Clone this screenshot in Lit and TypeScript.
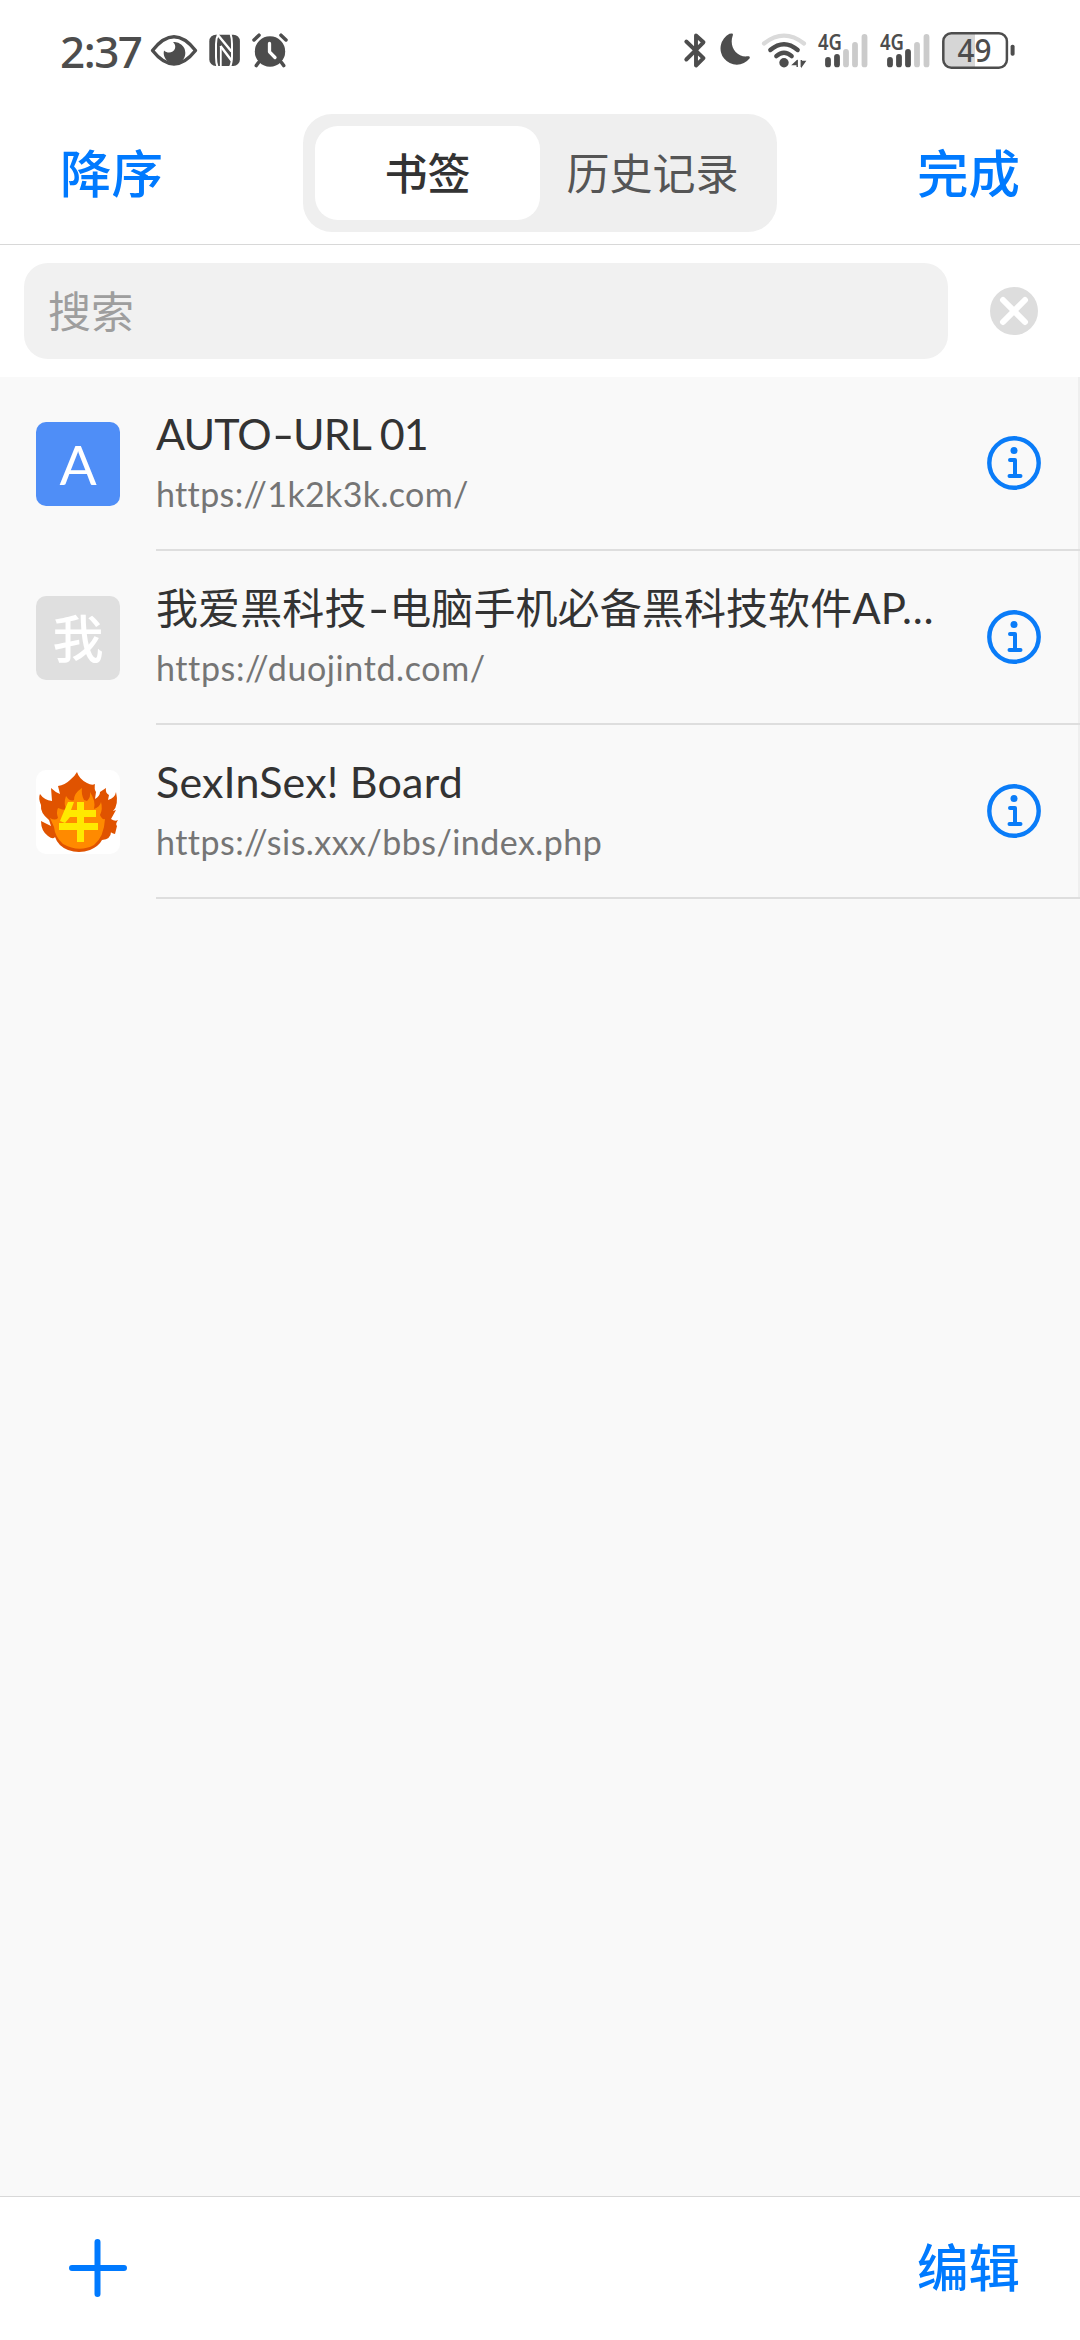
import { LitElement, html, svg, css, nothing } from "lit";
import { customElement, property } from "lit/decorators.js";

interface Bookmark {
  title: string;
  url: string;
  kind: "blue" | "gray" | "flame";
  letter: string;
  fit: string;
}

const BOOKMARKS: Bookmark[] = [
  { title: "AUTO-URL 01", url: "https://1k2k3k.com/", kind: "blue", letter: "A", fit: "one" },
  { title: "我爱黑科技-电脑手机必备黑科技软件AP…", url: "https://duojintd.com/", kind: "gray", letter: "我", fit: "two" },
  { title: "SexInSex! Board", url: "https://sis.xxx/bbs/index.php", kind: "flame", letter: "牛", fit: "three" },
];

// Status icons share one coordinate space; each takes the slice [x, x + w].
const slice = (x: number, w: number, body: unknown) =>
  html`<svg width=${w} height="102" viewBox="${x} 0 ${w} 102">${body}</svg>`;

const signal = (dx: number, lit: number) => {
  const bars = [[828, 57], [837, 54], [846, 49], [855, 42], [864.5, 34]];
  return svg`
    <text class="net" x=${818 + dx} y="50" textLength="24" lengthAdjust="spacingAndGlyphs">4G</text>
    ${bars.map(([x, y], i) => svg`<rect x=${x - 2.9 + dx} y=${y} width="5.8" height=${67.3 - y} rx="2.9" fill=${i < lit ? "#4d4d4d" : "#cbcbcb"}/>`)}`;
};

@customElement("status-bar")
class StatusBar extends LitElement {
  static styles = css`
    :host { display: flex; height: 102px; padding: 0 60px; justify-content: space-between; color: #4d4d4d; }
    .group { display: flex; align-items: center; }
    .time { width: 89px; line-height: 101px; font-family: "Noto Sans", sans-serif; font-weight: 500; font-size: 44px; letter-spacing: -1.5px; white-space: nowrap; }
    svg { display: block; flex: none; }
    .net { font: 600 22px "Noto Sans", sans-serif; fill: #4d4d4d; }
    .level { font: 500 33px "Noto Sans", sans-serif; fill: #4d4d4d; }
  `;
  render() {
    return html`
      <div class="group">
        <span class="time">2:37</span>
        ${slice(149, 53, svg`
          <path d="M152.500 50.500C160 41 167 36.800 174 36.800S188 41 195.500 50.500C188 60 181 64 174 64S160 60 152.500 50.500Z" fill="none" stroke="#4d4d4d" stroke-width="3.400" stroke-linejoin="round"/>
          <path d="M173 42.200A10.800 10.800 0 1 1 164 50.500C167.500 54 173.500 53 175 48.500C175.700 46 175 43.500 173 42.200Z" fill="#4d4d4d"/>`)}
        ${slice(202, 45, svg`
          <rect x="209.300" y="34.700" width="30.600" height="31.300" rx="6.500" fill="#4d4d4d"/>
          <path d="M218.300 34Q216 38 216 44V57Q216 63 217.500 67M230.600 34Q232 38 232 44V56Q232 63 230 67" fill="none" stroke="#fff" stroke-width="2"/>
          <path d="M217.500 34.500L231.500 51.500M220.500 46L231.500 60.500" fill="none" stroke="#fff" stroke-width="2.400"/>
          <path d="M220.800 46V67" stroke="#fff" stroke-width="1.800"/>`)}
        ${slice(247, 45, svg`
          <circle cx="270" cy="51.500" r="15.200" fill="#4d4d4d"/>
          <path d="M254 40L259 35.200M286 40L281 35.200M258.500 62.500L256.300 65.600M281.500 62.500L283.700 65.600" stroke="#4d4d4d" stroke-width="3.500" stroke-linecap="round"/>
          <path d="M269.500 43.500V51.800L275 57.500" fill="none" stroke="#fff" stroke-width="3.300" stroke-linecap="round" stroke-linejoin="round"/>`)}
      </div>
      <div class="group">
        ${slice(680, 32, svg`<path d="M686.300 41.500L703.500 58.200L696 65.500V35.500L703.500 42.300L686.300 59.500" fill="none" stroke="#4d4d4d" stroke-width="3.900" stroke-linejoin="round" stroke-linecap="round"/>`)}
        ${slice(712, 44, svg`<path d="M731.500 33.500C733 33.500 733.300 34.500 732.600 36C729 46.500 736.500 57.500 747.500 56.300C749.500 56 750.300 57 749.500 58.600A16.300 16.300 0 1 1 729.500 33.800Z" fill="#4d4d4d"/>`)}
        ${slice(756, 56, svg`
          <path d="M764 43.500Q784 27.800 804 43.500" fill="none" stroke="#dadada" stroke-width="4.200" stroke-linecap="round"/>
          <path d="M770.300 50Q784 38.300 797.700 50M776.300 56.200Q784 49.200 791.700 56.200" fill="none" stroke="#4d4d4d" stroke-width="4.300" stroke-linecap="round"/>
          <circle cx="784" cy="62.800" r="4.700" fill="#4d4d4d"/>
          <path d="M797.200 60V67M796.800 61L793 64.500H796.800ZM801.300 60V67M801.700 66L805 61.500H801.700Z" stroke="#4d4d4d" stroke-width="1.400" fill="#4d4d4d"/>`)}
        ${slice(812, 62, signal(0, 2))}
        ${slice(874, 62, signal(62, 3))}
        ${slice(936, 84, svg`
          <path d="M951 33.500H975V67.500H951Q943.500 67.500 943.500 60V41Q943.500 33.500 951 33.500Z" fill="#d6d6d6"/>
          <rect x="943.300" y="33.300" width="63.600" height="34.500" rx="8" fill="none" stroke="#4d4d4d" stroke-width="2.500"/>
          <rect x="1010.600" y="44.800" width="4" height="11" rx="1.800" fill="#4d4d4d"/>
          <text class="level" x="957.500" y="62.200" textLength="34" lengthAdjust="spacingAndGlyphs">49</text>`)}
      </div>`;
  }
}

@customElement("bookmark-row")
class BookmarkRow extends LitElement {
  @property({ attribute: false }) item!: Bookmark;
  static styles = css`
    :host { display: flex; height: 174px; padding-left: 36px; align-items: center; gap: 36px; }
    .icon { flex: none; box-sizing: border-box; width: 84px; height: 84px; border-radius: 10px; overflow: hidden; color: #fff; display: flex; align-items: center; justify-content: center; line-height: 84px; font-family: Lato, "Noto Sans CJK SC", sans-serif; }
    .blue { background: #4f8ef7; font-size: 55px; }
    .gray { background: #dfdfdf; font-size: 51px; font-family: "Noto Sans CJK SC", sans-serif; font-weight: 500; line-height: 78px; padding-bottom: 4px; }
    .flame { background: #fff; }
    .body { flex: 1; min-width: 0; height: 174px; box-sizing: border-box; border-bottom: 2px solid #dedede; display: flex; align-items: center; justify-content: space-between; padding-right: 39px; }
    .text { display: flex; flex-direction: column; padding-top: 2px; font-family: Lato, "Noto Sans CJK SC", sans-serif; white-space: nowrap; font-variant-ligatures: none; }
    .title { height: 60px; line-height: 60px; font-size: 43px; color: #333; }
    .url { height: 60px; line-height: 60px; font-size: 34px; color: #757575; }
    .dash { display: inline-block; margin: 0 3px 0 4px; transform: scaleX(1.4); }
    .one .title { letter-spacing: -0.9px; }
    .two .title { font-size: 42px; letter-spacing: 0.1px; }
    .three .title { letter-spacing: 0.2px; }
    .one .url { letter-spacing: 0.35px; }
    .two .url { letter-spacing: 0.6px; }
    .three .url { letter-spacing: 0.45px; }
    .info { flex: none; display: block; }
  `;
  private flame() {
    return svg`
      <path d="M41 2Q43 9 51 13Q56 16 59 14Q58 19 60 22L59 29Q64 26 64 22L70 18Q69 23 73 25L72 30Q79 28 80 22Q83 35 77 41L80 40L75 49Q79 52 82 50Q79 54 81 56L79 64Q75 63 75 62Q75 69 66 70Q63 76 54 80Q43 84 32 80Q22 76 19 67Q17 70 12 66Q5 61 5 51L15 56L13 50Q4 43 5 35Q2 28 4 24Q8 30 16 31L15 18Q19 22 24 24L22 16Q29 15 34 10Q39 6 41 2Z" fill="#e05300"/>
      <path d="M46 18Q45 24 48 30L51 31Q55 27 54 22Q60 31 58 39Q64 37 65 32Q67 39 64 45Q66 50 69 49Q68 67 58 75Q43 83 27 74Q19 67 18 57L14 48Q19 51 22 48Q20 42 22 38Q26 40 31 40Q27 34 30 26Q34 32 38 30Q38 23 46 18Z" fill="#ff8a00"/>
      <path d="M26 46L32 32H38L35 40H41V32H48V40H60V47H48V53H62V60H48V72H41V60H23V53H41V47H34L29 53L24 51Z" fill="#ffe900"/>`;
  }
  render() {
    const b = this.item;
    if (!b) return nothing;
    const [head, tail] = b.title.split("-");
    return html`
      <div class="icon ${b.kind}">
        ${b.kind === "flame" ? html`<svg width="84" height="84" viewBox="0 0 84 84">${this.flame()}</svg>` : b.letter}
      </div>
      <div class="body ${b.fit}">
        <div class="text">
          <span class="title">${head}${tail ? html`<span class="dash">-</span>${tail}` : nothing}</span>
          <span class="url">${b.url}</span>
        </div>
        <svg class="info" width="54" height="54" viewBox="0 0 54 54" fill="none" stroke="#0a7cf8" stroke-width="4" stroke-linecap="round" stroke-linejoin="round">
          <circle cx="27" cy="27" r="24.700" stroke-width="4.400"/>
          <circle cx="27" cy="14.500" r="3.500" fill="#0a7cf8" stroke="none"/>
          <path d="M23 24H28V40M22.500 40H33.500"/>
        </svg>
      </div>`;
  }
}

@customElement("app-root")
class AppRoot extends LitElement {
  static styles = css`
    :host { display: flex; flex-direction: column; width: 1080px; height: 2340px; background: #fff; overflow: hidden; font-family: "Noto Sans CJK SC", sans-serif; }
    .head { flex: none; height: 142px; padding: 0 60px; display: flex; align-items: center; justify-content: space-between; border-bottom: 1px solid #d8d8d8; }
    .action { font-size: 51.5px; line-height: 60px; font-weight: 500; color: #007aff; padding-bottom: 5px; }
    .tabs { display: flex; width: 450px; height: 94px; padding: 12px; border-radius: 29px; background: #efefef; }
    .tab { flex: 1; display: flex; align-items: center; justify-content: center; border-radius: 23px; box-sizing: border-box; padding-bottom: 4px; font-size: 43px; line-height: 60px; color: #555; }
    .active { background: #fff; color: #333; font-weight: 500; }
    .search { flex: none; height: 132px; padding: 0 42px 0 24px; display: flex; align-items: center; justify-content: space-between; }
    .field { width: 924px; height: 96px; box-sizing: border-box; padding-left: 24px; border-radius: 24px; background: #f1f1f1; color: #9e9e9e; font-size: 43px; line-height: 92px; }
    .list { flex: 1; background: #f9f9f9; }
    .rows { box-shadow: inset -2px 0 0 #efefef; }
    .foot { flex: none; height: 143px; padding: 0 60px 0 69px; display: flex; align-items: center; justify-content: space-between; border-top: 1px solid #d8d8d8; }
    .foot .action { padding-bottom: 7px; }
    svg { display: block; }
  `;
  render() {
    return html`
      <status-bar></status-bar>
      <div class="head">
        <span class="action">降序</span>
        <div class="tabs"><div class="tab active">书签</div><div class="tab">历史记录</div></div>
        <span class="action">完成</span>
      </div>
      <div class="search">
        <div class="field">搜索</div>
        <svg width="48" height="48" viewBox="0 0 48 48"><circle cx="24" cy="24" r="24" fill="#ddd"/><path d="M13 13L35 35M35 13L13 35" stroke="#fff" stroke-width="6" stroke-linecap="round"/></svg>
      </div>
      <div class="list"><div class="rows">${BOOKMARKS.map((b) => html`<bookmark-row .item=${b}></bookmark-row>`)}</div></div>
      <div class="foot">
        <svg width="58" height="60" viewBox="0 0 58 60"><path d="M3 29H55M28.500 3V55" stroke="#007aff" stroke-width="6" stroke-linecap="round"/></svg>
        <span class="action">编辑</span>
      </div>`;
  }
}
